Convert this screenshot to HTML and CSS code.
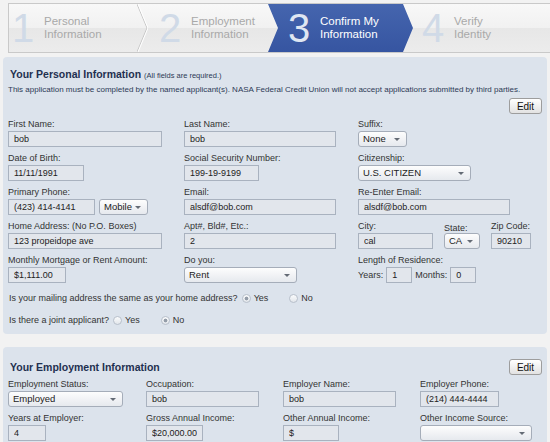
FILE: index.html
```html
<!DOCTYPE html>
<html lang="en">
<head>
    <meta charset="UTF-8">
    <meta name="viewport" content="width=device-width, initial-scale=1.0">
    <title>Confirm My Information</title>
    <link rel="stylesheet" href="styles.css">
</head>
<body>
    <div class="steps">
        <div class="step step-1">
            <span class="num">1</span>
            <span class="step-text">Personal<br>Information</span>
        </div>
        <svg class="sep" width="11" height="48" viewBox="0 0 11 48">
            <polyline points="0,0 10,24 0,48" fill="none" stroke="#c6c6c6" stroke-width="1"/>
            <polyline points="1,0 11,24 1,48" fill="none" stroke="#ffffff" stroke-width="1"/>
        </svg>
        <div class="step step-2">
            <span class="num">2</span>
            <span class="step-text">Employment<br>Information</span>
        </div>
        <div class="step step-3 current">
            <span class="num">3</span>
            <span class="step-text">Confirm My<br>Information</span>
        </div>
        <div class="step step-4">
            <span class="num">4</span>
            <span class="step-text">Verify<br>Identity</span>
        </div>
    </div>

    <div class="panel">
        <h2>Your Personal Information <small>(All fields are required.)</small></h2>
        <p class="note">This application must be completed by the named applicant(s). NASA Federal Credit Union will not accept applications submitted by third parties.</p>
        <div class="actions"><button class="btn">Edit</button></div>

        <div class="grid grid-personal">
            <div class="field">
                <label>First Name:</label>
                <input type="text" class="w-153" value="bob">
            </div>
            <div class="field">
                <label>Last Name:</label>
                <input type="text" class="w-152" value="bob">
            </div>
            <div class="field">
                <label>Suffix:</label>
                <span class="select w-49">None</span>
            </div>

            <div class="field">
                <label>Date of Birth:</label>
                <input type="text" class="w-76" value="11/11/1991">
            </div>
            <div class="field">
                <label>Social Security Number:</label>
                <input type="text" class="w-75" value="199-19-9199">
            </div>
            <div class="field">
                <label>Citizenship:</label>
                <span class="select w-113">U.S. CITIZEN</span>
            </div>

            <div class="field">
                <label>Primary Phone:</label>
                <div class="inline">
                    <input type="text" class="w-87" value="(423) 414-4141">
                    <span class="select w-49">Mobile</span>
                </div>
            </div>
            <div class="field">
                <label>Email:</label>
                <input type="text" class="w-152" value="alsdf@bob.com">
            </div>
            <div class="field">
                <label>Re-Enter Email:</label>
                <input type="text" class="w-152" value="alsdf@bob.com">
            </div>

            <div class="field">
                <label>Home Address: (No P.O. Boxes)</label>
                <input type="text" class="w-153" value="123 propeidope ave">
            </div>
            <div class="field">
                <label>Apt#, Bld#, Etc.:</label>
                <input type="text" class="w-152" value="2">
            </div>
            <div class="city-row">
                <div class="field">
                    <label>City:</label>
                    <input type="text" class="w-75" value="cal">
                </div>
                <div class="field">
                    <label class="low">State:</label>
                    <span class="select w-36">CA</span>
                </div>
                <div class="field">
                    <label>Zip Code:</label>
                    <input type="text" class="w-40" value="90210">
                </div>
            </div>

            <div class="field">
                <label>Monthly Mortgage or Rent Amount:</label>
                <input type="text" class="w-58" value="$1,111.00">
            </div>
            <div class="field">
                <label>Do you:</label>
                <span class="select w-113">Rent</span>
            </div>
            <div class="field">
                <label>Length of Residence:</label>
                <div class="inline residence">
                    <span>Years:</span>
                    <input type="text" class="w-26" value="1">
                    <span>Months:</span>
                    <input type="text" class="w-26" value="0">
                </div>
            </div>
        </div>

        <div class="question">
            Is your mailing address the same as your home address?
            <input type="radio" class="radio" name="mailing" checked disabled><span class="opt">Yes</span>
            <input type="radio" class="radio" name="mailing" disabled><span class="opt">No</span>
        </div>
        <div class="question">
            Is there a joint applicant?
            <input type="radio" class="radio" name="joint" disabled><span class="opt">Yes</span>
            <input type="radio" class="radio" name="joint" checked disabled><span class="opt">No</span>
        </div>
    </div>

    <div class="panel panel-employment">
        <div class="panel-head">
            <h2>Your Employment Information</h2>
            <button class="btn">Edit</button>
        </div>

        <div class="grid grid-employment">
            <div class="field">
                <label>Employment Status:</label>
                <span class="select w-115">Employed</span>
            </div>
            <div class="field">
                <label>Occupation:</label>
                <input type="text" class="w-113" value="bob">
            </div>
            <div class="field">
                <label>Employer Name:</label>
                <input type="text" class="w-113" value="bob">
            </div>
            <div class="field">
                <label>Employer Phone:</label>
                <input type="text" class="w-79" value="(214) 444-4444">
            </div>

            <div class="field">
                <label>Years at Employer:</label>
                <input type="text" class="w-38" value="4">
            </div>
            <div class="field">
                <label>Gross Annual Income:</label>
                <input type="text" class="w-57" value="$20,000.00">
            </div>
            <div class="field">
                <label>Other Annual Income:</label>
                <input type="text" class="w-56" value="$">
            </div>
            <div class="field">
                <label>Other Income Source:</label>
                <span class="select w-112"></span>
            </div>
        </div>
    </div>
</body>
</html>
```

FILE: styles.css
```css
body {
    margin: 0;
    background-color: #f2f2f2;
    font-family: "Liberation Sans", Arial, sans-serif;
    color: #333;
}

/* step bar */
.steps {
    display: flex;
    height: 48px;
    margin: 3px 0 0 8px;
    border: 1px solid #c9c9c9;
    border-right: none;
    background: linear-gradient(#f8f8f8, #f1f1f1 50%, #e7e7e7 50%, #ececec);
}
.step {
    display: flex;
    align-items: center;
    flex-shrink: 0;
}
.step-1 {
    width: 125px;
    padding-left: 3px;
}
.step-2 {
    width: 109px;
    padding-left: 11px;
}
.step-3 {
    width: 125px;
    padding-left: 20px;
}
.step-4 {
    flex: 1;
    padding-left: 9px;
}
.sep {
    flex-shrink: 0;
    display: block;
}
.num {
    width: 32px;
    font-size: 40px;
    line-height: 48px;
    color: #d0dae7;
}
.step-text {
    font-size: 11.5px;
    line-height: 13px;
    color: #a9a9a9;
}
.current {
    background: linear-gradient(#4565ae, #3655a1);
    clip-path: polygon(0 0, 135px 0, 145px 50%, 135px 100%, 0 100%, 10px 50%);
}
.current .num {
    color: #dfe6f2;
}
.current .step-text {
    color: #fff;
}

/* panels */
.panel {
    margin: 4px 3px 0;
    padding: 10px 5px 7px;
    background-color: #dce3ec;
    border-radius: 4px;
}
.panel-employment {
    margin-top: 13px;
    padding-top: 12px;
    padding-bottom: 30px;
}
h2 {
    margin: 0;
    padding-left: 2px;
    font-size: 10.5px;
    line-height: 14px;
    color: #1f3050;
}
h2 small {
    font-size: 7.5px;
    font-weight: normal;
    color: #2c3a56;
}
.note {
    margin: 2px 0 0;
    font-size: 8px;
    line-height: 10px;
    color: #2c3a56;
}
.actions {
    display: flex;
    justify-content: flex-end;
    margin-top: 3px;
}
.panel-head {
    display: flex;
    justify-content: space-between;
    align-items: center;
}
.btn {
    width: 33px;
    height: 16px;
    padding: 0;
    font-family: "Liberation Sans", Arial, sans-serif;
    font-size: 10px;
    color: #111;
    background: linear-gradient(#ffffff, #e2e2e2);
    border: 1px solid #9d9d9d;
    border-radius: 3px;
}

/* form grid */
.grid {
    display: grid;
    row-gap: 5px;
    margin-top: 4px;
}
.grid-personal {
    grid-template-columns: 176px 174px 1fr;
}
.grid-employment {
    grid-template-columns: 138px 137px 137px 1fr;
    margin-top: 3px;
}
.field label {
    display: block;
    height: 12px;
    margin-bottom: 1px;
    font-size: 9px;
    line-height: 12px;
    white-space: nowrap;
}
.field label.low {
    line-height: 16px;
}
input[type="text"] {
    box-sizing: border-box;
    display: block;
    height: 16px;
    margin: 0;
    padding: 0 5px;
    font-family: "Liberation Sans", Arial, sans-serif;
    font-size: 9px;
    color: #222;
    background-color: #e2e6ec;
    border: 1px solid #a9b2bf;
    border-radius: 0;
}
.select {
    box-sizing: border-box;
    position: relative;
    display: block;
    height: 16px;
    padding: 0 4px;
    font-size: 9.5px;
    line-height: 14px;
    color: #222;
    background: linear-gradient(#fdfdfd, #e6e9ee);
    border: 1px solid #a5adb9;
    border-radius: 3px;
}
.select::after {
    content: "";
    position: absolute;
    right: 6px;
    top: 6px;
    border-left: 3px solid transparent;
    border-right: 3px solid transparent;
    border-top: 3px solid #646b75;
}
.inline {
    display: flex;
    align-items: center;
    gap: 4px;
}
.residence {
    gap: 3px;
    font-size: 9px;
}
.city-row {
    display: flex;
    gap: 11px;
}

.w-26 { width: 26px; }
.w-36 { width: 36px; }
.w-38 { width: 38px; }
.w-40 { width: 40px; }
.w-49 { width: 49px; }
.w-56 { width: 56px; }
.w-57 { width: 57px; }
.w-58 { width: 58px; }
.w-75 { width: 75px; }
.w-76 { width: 76px; }
.w-79 { width: 79px; }
.w-87 { width: 87px; }
.w-112 { width: 112px; }
.w-113 { width: 113px; }
.w-115 { width: 115px; }
.w-152 { width: 152px; }
.w-153 { width: 154px; }

/* yes / no questions */
.question {
    display: flex;
    align-items: center;
    height: 14px;
    margin-top: 8px;
    padding-left: 1px;
    font-size: 9px;
}
.radio {
    appearance: none;
    box-sizing: border-box;
    width: 9px;
    height: 9px;
    margin: 0 3px 0 4px;
    border: 1px solid #b8c0cb;
    border-radius: 50%;
    background: linear-gradient(#fafbfc, #e2e6eb);
}
.radio:checked {
    background: radial-gradient(circle, #949da9 0 1.6px, transparent 2.2px), linear-gradient(#fafbfc, #e2e6eb);
}
.opt {
    margin-right: 17px;
}
```
